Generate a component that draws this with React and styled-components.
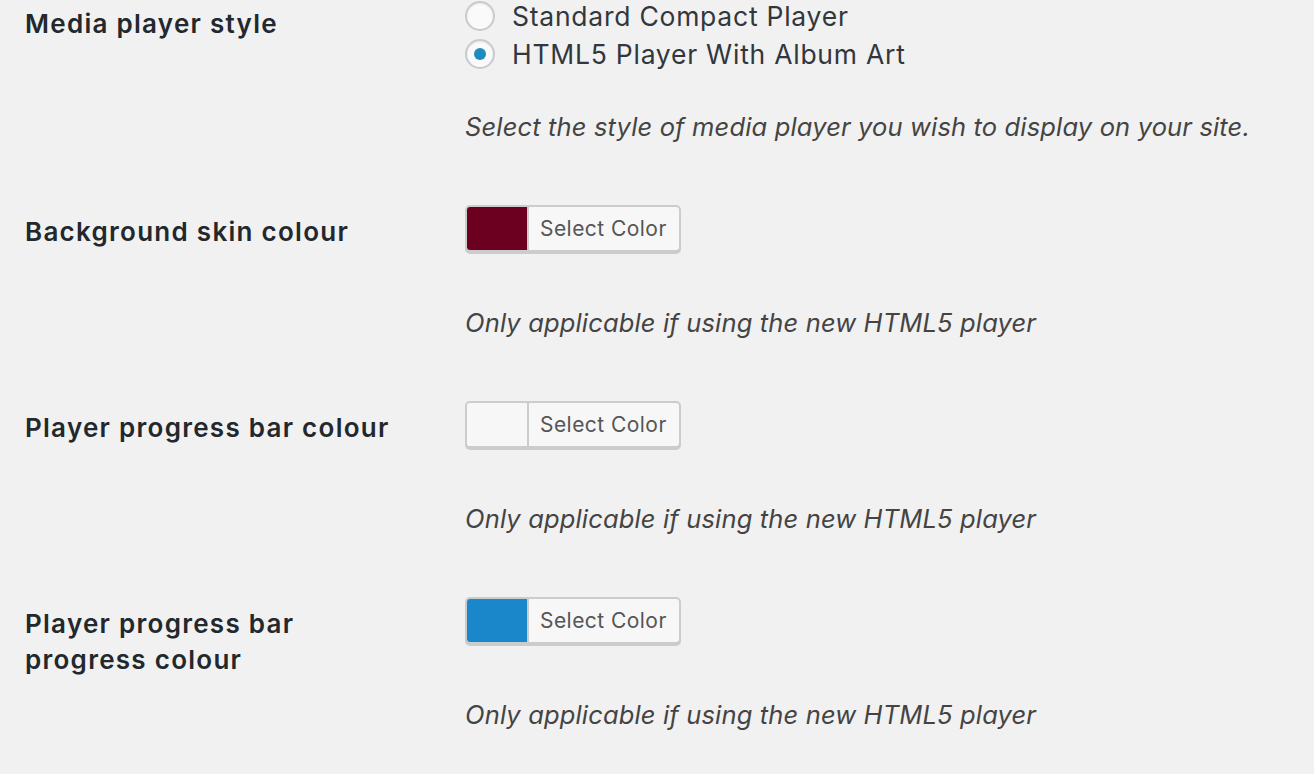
import React, { useState } from 'react';
import styled, { createGlobalStyle } from 'styled-components';

const GlobalStyle = createGlobalStyle`
  html, body {
    margin: 0;
    padding: 0;
    background: #f1f1f1;
  }
  body {
    font-family: Inter, "Noto Sans", sans-serif;
    color: #23282d;
  }
`;

const Form = styled.div`
  display: flex;
  flex-direction: column;
  gap: 60px;
  padding-left: 25px;
`;

const Row = styled.div`
  display: grid;
  grid-template-columns: 440px 1fr;
`;

const Label = styled.div`
  padding-top: ${(p) => p.top}px;
  font-size: 26px;
  line-height: 36px;
  font-weight: 600;
  letter-spacing: 1.27px;
  color: #23282d;
  max-width: 395px;
`;

const Field = styled.div`
  display: flex;
  flex-direction: column;
  align-items: flex-start;
`;

const RadioList = styled.div`
  display: flex;
  flex-direction: column;
  gap: 6px;
`;

const RadioItem = styled.label`
  display: flex;
  align-items: center;
  height: 32px;
  font-size: 26.5px;
  letter-spacing: 0.75px;
  color: #32373c;
  cursor: pointer;
`;

const RadioCircle = styled.span`
  box-sizing: border-box;
  width: 30px;
  height: 30px;
  margin-right: 17px;
  border-radius: 50%;
  border: 2px solid #c8cbce;
  background: #fafafa;
  box-shadow: inset 0 1px 2px rgba(0, 0, 0, 0.08);
  display: flex;
  align-items: center;
  justify-content: center;
  &::after {
    content: '';
    width: 12px;
    height: 12px;
    border-radius: 50%;
    background: #1e8cbe;
    display: ${(p) => (p.checked ? 'block' : 'none')};
  }
`;

const Description = styled.p`
  margin: ${(p) => p.gap}px 0 0;
  font-size: 25.5px;
  line-height: 36px;
  letter-spacing: 0.15px;
  font-style: italic;
  color: #444;
`;

const ColorButton = styled.button`
  display: flex;
  align-items: stretch;
  height: 47px;
  padding: 0;
  border: 2px solid #ccc;
  border-radius: 5px;
  background: #f7f7f7;
  box-shadow: 0 2px 0 #ccc;
  overflow: hidden;
  cursor: pointer;
  font-family: inherit;
`;

const Swatch = styled.span`
  width: 60px;
  background: ${(p) => p.color};
  border-right: 2px solid #ccc;
`;

const ButtonText = styled.span`
  display: flex;
  align-items: center;
  padding: 0 12px 0 11px;
  font-size: 21px;
  letter-spacing: 0.45px;
  color: #555;
`;

const colourRows = [
  { label: 'Background skin colour', color: '#6b0020' },
  { label: 'Player progress bar colour', color: '#f7f7f7' },
  { label: 'Player progress bar progress colour', color: '#1a87cb' },
];

export default function App() {
  const [style, setStyle] = useState('html5');
  return (
    <>
      <GlobalStyle />
      <Form>
        <Row>
          <Label top={6}>Media player style</Label>
          <Field>
            <RadioList>
              <RadioItem onClick={() => setStyle('compact')}>
                <RadioCircle checked={style === 'compact'} />
                Standard Compact Player
              </RadioItem>
              <RadioItem onClick={() => setStyle('html5')}>
                <RadioCircle checked={style === 'html5'} />
                HTML5 Player With Album Art
              </RadioItem>
            </RadioList>
            <Description gap={39}>
              Select the style of media player you wish to display on your site.
            </Description>
          </Field>
        </Row>
        {colourRows.map((row) => (
          <Row key={row.label}>
            <Label top={9}>{row.label}</Label>
            <Field>
              <ColorButton type="button">
                <Swatch color={row.color} />
                <ButtonText>Select Color</ButtonText>
              </ColorButton>
              <Description gap={53}>Only applicable if using the new HTML5 player</Description>
            </Field>
          </Row>
        ))}
      </Form>
    </>
  );
}
